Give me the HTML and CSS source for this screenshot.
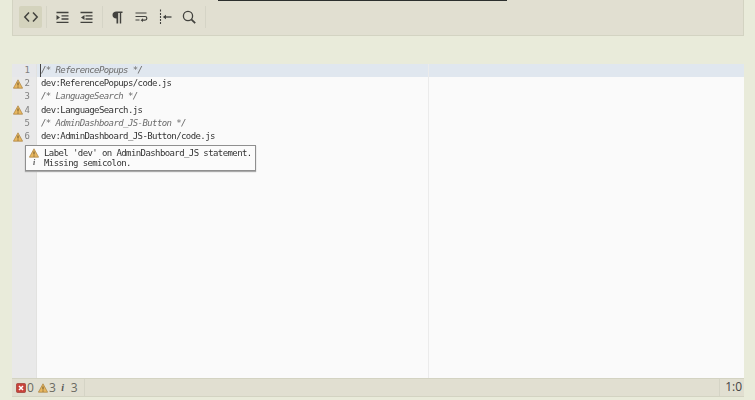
FILE: index.html
```html
<!DOCTYPE html>
<html lang="en">
<head>
<meta charset="utf-8">
<title>Editor</title>
<link rel="stylesheet" href="styles.css">
</head>
<body>
<div class="page">
  <div class="toolbar">
    <div class="topbar"></div>
    <div class="tool-row">
      <span class="tool active"><svg width="16" height="16" viewBox="0 0 16 16"><path d="M6 3.500 1.800 8 6 12.500M10 3.500 14.200 8 10 12.500" class="st" stroke-width="1.500"/></svg></span>
      <span class="sep"></span>
      <span class="tool"><svg width="13" height="13" viewBox="0 0 13 13"><path d="M.5 1.500h12M5.500 4.800h7M5.500 8h7M.5 11.400h12" class="st" stroke-width="1.300"/><path d="M.5 4 4 6.500.5 9z" class="fl"/></svg></span>
      <span class="tool"><svg width="13" height="13" viewBox="0 0 13 13"><path d="M.5 1.500h12M5.500 4.800h7M5.500 8h7M.5 11.400h12" class="st" stroke-width="1.300"/><path d="M4.500 4 1 6.500 4.500 9z" class="fl"/></svg></span>
      <span class="sep"></span>
      <span class="tool narrow"><svg width="11" height="13" viewBox="0 0 11 13"><path d="M4.500 7.500C2 7.500.5 6 .5 4S2 .5 4.500.5h6v1.500H9.200v10.500H7.800V2H6.200v10.500H4.500z" class="fl"/></svg></span>
      <span class="tool"><svg width="13" height="12" viewBox="0 0 13 12"><path d="M.5 2h11M.5 5.500h9.500a1.800 1.800 0 0 1 0 3.700H7M.5 9h4" class="st" stroke-width="1.200"/><path d="M8 7.300 5.600 9.200 8 11.100z" class="fl"/></svg></span>
      <span class="tool"><svg width="13" height="16" viewBox="0 0 13 16"><path d="M1.500 0.500v2M1.500 4v2M1.500 7v2M1.500 10v2M1.500 13v2" class="st" stroke-width="1.100"/><path d="M5 8h7.500" class="st" stroke-width="1.300"/><path d="M7 5.700 3.800 8 7 10.300z" class="fl"/></svg></span>
      <span class="tool"><svg width="14" height="14" viewBox="0 0 14 14"><circle cx="6" cy="6" r="4.600" class="st" stroke-width="1.300"/><path d="m9.300 9.300 3.900 3.900" class="st" stroke-width="1.700"/></svg></span>
      <span class="sep"></span>
    </div>
  </div>
  <div class="editor">
    <div class="gutter">
      <div class="gl active-g"><span>1</span></div>
      <div class="gl"><svg class="warn" viewBox="0 0 10 10"><path d="M5 .8 9.600 9.200H.4z"/><path d="M5 3.500v3M5 7.500v1" class="mark"/></svg><span>2</span></div>
      <div class="gl"><span>3</span></div>
      <div class="gl"><svg class="warn" viewBox="0 0 10 10"><path d="M5 .8 9.600 9.200H.4z"/><path d="M5 3.500v3M5 7.500v1" class="mark"/></svg><span>4</span></div>
      <div class="gl"><span>5</span></div>
      <div class="gl"><svg class="warn" viewBox="0 0 10 10"><path d="M5 .8 9.600 9.200H.4z"/><path d="M5 3.500v3M5 7.500v1" class="mark"/></svg><span>6</span></div>
    </div>
    <div class="code">
      <div class="margin-line"></div>
      <div class="line active-l"><span class="cursor"></span><span class="comment">/* ReferencePopups */</span></div>
      <div class="line">dev:ReferencePopups/code.js</div>
      <div class="line"><span class="comment">/* LanguageSearch */</span></div>
      <div class="line">dev:LanguageSearch.js</div>
      <div class="line"><span class="comment">/* AdminDashboard_JS-Button */</span></div>
      <div class="line">dev:AdminDashboard_JS-Button/code.js</div>
    </div>
    <div class="tooltip">
      <div class="tip-row"><svg class="warn" viewBox="0 0 10 10"><path d="M5 .8 9.600 9.200H.4z"/><path d="M5 3.500v3M5 7.500v1" class="mark"/></svg><span>Label 'dev' on AdminDashboard_JS statement.</span></div>
      <div class="tip-row"><span class="info">i</span><span>Missing semicolon.</span></div>
    </div>
  </div>
  <div class="status">
    <div class="counts">
      <svg class="err" viewBox="0 0 10 10"><rect x=".5" y=".5" width="9" height="9" rx="1"/><path d="m3 3 4 4M7 3 3 7"/></svg><span class="num">0</span>
      <svg class="warn" viewBox="0 0 10 10"><path d="M5 .8 9.600 9.200H.4z"/><path d="M5 3.500v3M5 7.500v1" class="mark"/></svg><span class="num">3</span>
      <span class="info big">i</span><span class="num">3</span>
    </div>
    <div class="pos">1:0</div>
  </div>
</div>
</body>
</html>
```
FILE: styles.css
```css
* { box-sizing: border-box; }
html, body { margin: 0; height: 100%; }
body { background: #e9ebda; overflow: hidden; }
.page { width: 755px; height: 400px; padding: 0 11px 0 12px; display: flex; flex-direction: column; filter: blur(0.35px); }
.toolbar { height: 36px; background: #e1dfd1; border: solid #d3d3c2; border-width: 0 1px 1px 1px; position: relative; flex: none; }
.topbar { position: absolute; left: 205px; top: 0; width: 289px; height: 1px; background: #2c2f2e; }
.tool-row { display: flex; align-items: center; height: 100%; padding: 6px 0 7px 6px; }
.tool { width: 24px; height: 22px; display: flex; align-items: center; justify-content: center; border-radius: 2px; }
.tool.active { background: #d4d3bd; width: 23px; }
.tool.narrow { width: 23px; }
.sep { width: 1px; height: 22px; background: #d5d4c6; margin: 0 3px 0 4px; }
.st { fill: none; stroke: #42423e; }
.fl { fill: #42423e; }
.editor { height: 314px; margin-top: 28px; display: flex; position: relative; flex: none; }
.gutter { width: 25px; background: #e9e9e9; border-right: 1px solid #e2e2e0; flex: none; font: 9px/13.200px "DejaVu Sans Mono", monospace; color: #808080; }
.gl { height: 13.200px; display: flex; align-items: center; justify-content: flex-end; padding-right: 6px; }
.gl .warn { margin-right: 2px; }
.active-g { background: #e6e7ea; }
.warn { width: 10px; height: 10px; flex: none; }
.warn path { fill: #e8b75f; stroke: #a8803d; stroke-width: .7; }
.warn path.mark { fill: none; stroke: #5a4520; stroke-width: .9; }
.code { flex: 1; background: #fafafa; position: relative; font: 9px/13.200px "DejaVu Sans Mono", monospace; letter-spacing: -.59px; color: #333; }
.line { height: 13.200px; padding: 0 0 0 4px; white-space: pre; position: relative; }
.active-l { background: #e0e7ef; }
.cursor { position: absolute; left: 3px; top: 0; width: 1px; height: 13px; background: #444; }
.comment { color: #6c6c6c; font-style: italic; }
.margin-line { position: absolute; left: 391px; top: 0; bottom: 0; width: 1px; background: #ebebeb; z-index: 1; }
.tooltip { position: absolute; left: 13px; top: 81px; width: 231px; height: 26px; background: #fbfbfb; border: 1px solid #8f8f8f; box-shadow: 0 1px 1px #aaa; padding: 2px 0 0 3px; font: 9px/10px "DejaVu Sans Mono", monospace; letter-spacing: -.59px; color: #333; z-index: 2; }
.tip-row { display: flex; align-items: center; gap: 5px; height: 10px; white-space: pre; }
.info { width: 10px; text-align: center; color: #555; font: italic 700 8px/10px "Liberation Serif", serif; flex: none; letter-spacing: 0; }
.status { height: 19px; background: #e1dfd1; border-top: 1px solid #d3d3c2; border-bottom: 1px solid #d3d3c2; display: flex; justify-content: space-between; align-items: center; flex: none; font: 12px/16px "Open Sans", sans-serif; color: #6a6a62; }
.counts { display: flex; align-items: center; gap: 1px; padding-left: 3px; height: 100%; border-right: 1px solid #d5d4c6; width: 73px; }
.err { width: 10px; height: 10px; flex: none; margin-left: 1px; }
.err rect { fill: #c9423a; stroke: #9a3a32; stroke-width: .7; }
.err path { stroke: #fff; stroke-width: 1.500; fill: none; }
.num { margin-right: 1px; }
.num + .warn { margin-left: 2px; }
.pos { padding: 0 2px 0 5px; height: 100%; border-left: 1px solid #d5d4c6; color: #444; }
.info.big { font-size: 10px; width: 6px; margin-left: 2px; margin-right: 4px; }
```
